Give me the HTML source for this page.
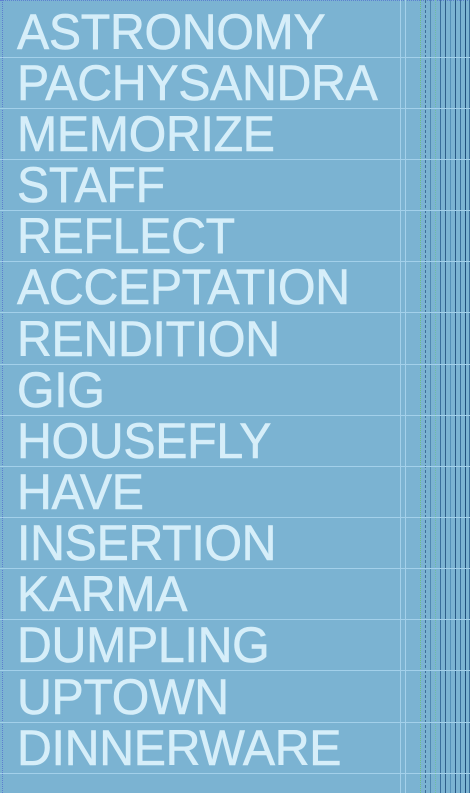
<!DOCTYPE html>
<html><head><style>
html,body{margin:0;padding:0}
body{width:470px;height:793px;background:#7bb3d2;position:relative;overflow:hidden;font-family:"Liberation Sans",sans-serif}
.h{position:absolute;left:0;width:470px;height:1px;background:#a3d0ea}
.w{position:absolute;left:17px;font-size:50px;line-height:50px;color:#d6eef9;letter-spacing:-0.3px;white-space:nowrap;transform:scaleX(0.965);transform-origin:0 0;-webkit-text-stroke:0.6px #d6eef9}
.v{position:absolute;top:0;height:793px;width:1px}
</style></head><body>
<div class="v" style="left:2px;border-left:1px dotted #5d7fd0;width:0"></div>
<div style="position:absolute;left:0;top:0;width:470px;height:0;border-top:1px dotted #5d7fd0"></div>
<div class="v" style="left:400px;background:#a3d0ea"></div>
<div class="v" style="left:405px;background:#a3d0ea"></div>
<div class="v" style="left:420px;border-left:1px dotted #6fbf7f;width:0"></div>
<div class="v" style="left:425px;border-left:1px dashed #3f6f9a;width:0"></div>
<div class="v" style="left:430px;background:#4f86b0"></div>
<div class="v" style="left:435px;border-left:1px dotted #6fbf9f;width:0"></div>
<div class="v" style="left:440px;background:#3a6f9c"></div>
<div class="v" style="left:445px;background:#2f5f8a"></div>
<div class="v" style="left:450px;background:#5590b8"></div>
<div class="v" style="left:455px;background:#2a5a86"></div>
<div class="v" style="left:460px;background:#3a6f9c"></div>
<div class="v" style="left:465px;background:#204f7c"></div>
<div class="v" style="left:469px;background:#3a6f9c"></div>
<div class="h" style="top:57px"></div>
<div class="h" style="top:108px"></div>
<div class="h" style="top:159px"></div>
<div class="h" style="top:210px"></div>
<div class="h" style="top:261px"></div>
<div class="h" style="top:312px"></div>
<div class="h" style="top:364px"></div>
<div class="h" style="top:415px"></div>
<div class="h" style="top:466px"></div>
<div class="h" style="top:517px"></div>
<div class="h" style="top:568px"></div>
<div class="h" style="top:619px"></div>
<div class="h" style="top:670px"></div>
<div class="h" style="top:722px"></div>
<div class="h" style="top:773px"></div>
<div class="w" style="top:7px">ASTRONOMY</div>
<div class="w" style="top:58px">PACHYSANDRA</div>
<div class="w" style="top:109px">MEMORIZE</div>
<div class="w" style="top:160px">STAFF</div>
<div class="w" style="top:211px">REFLECT</div>
<div class="w" style="top:262px">ACCEPTATION</div>
<div class="w" style="top:314px">RENDITION</div>
<div class="w" style="top:365px">GIG</div>
<div class="w" style="top:416px">HOUSEFLY</div>
<div class="w" style="top:467px">HAVE</div>
<div class="w" style="top:518px">INSERTION</div>
<div class="w" style="top:569px">KARMA</div>
<div class="w" style="top:620px">DUMPLING</div>
<div class="w" style="top:672px">UPTOWN</div>
<div class="w" style="top:723px">DINNERWARE</div>
</body></html>
